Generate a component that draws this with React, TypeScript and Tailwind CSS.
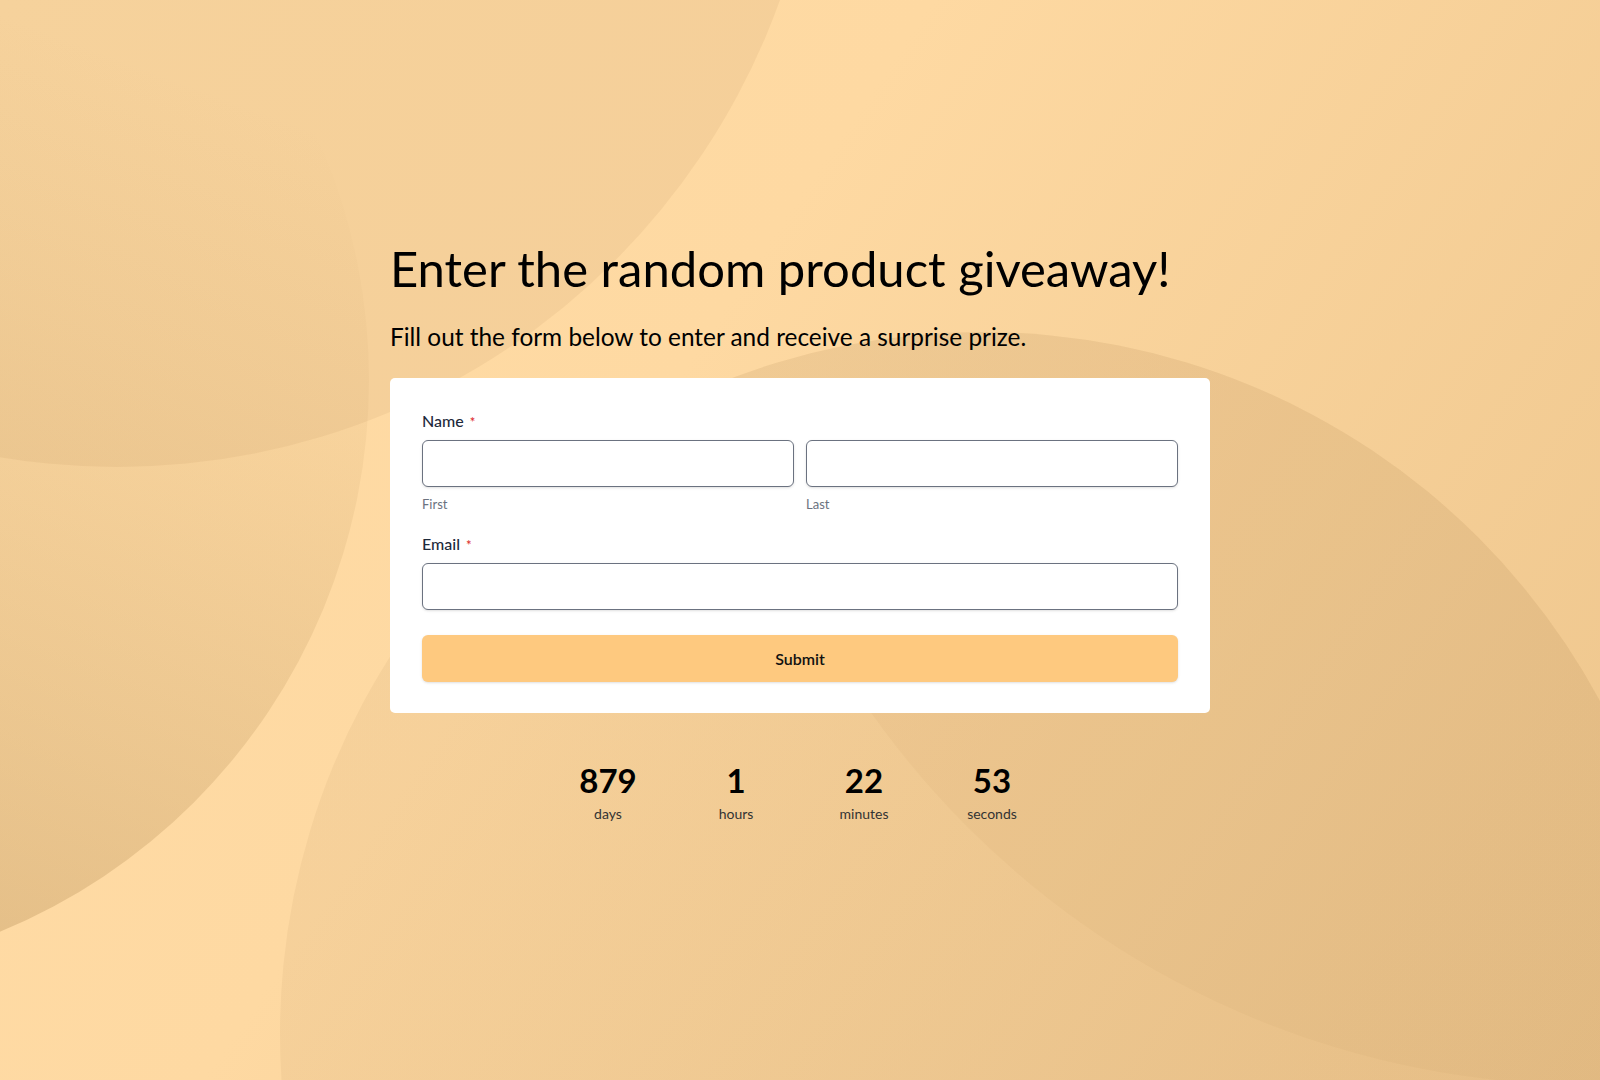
import React from "react"

const countdown = [
    { value: "879", label: "days" },
    { value: "1", label: "hours" },
    { value: "22", label: "minutes" },
    { value: "53", label: "seconds" },
]

const Background = () => (
    <svg className="absolute inset-0 w-full h-full" viewBox="0 0 1600 1080" preserveAspectRatio="none">
        <defs>
            <linearGradient id="base" x1="0" y1="0" x2="1600" y2="1080" gradientUnits="userSpaceOnUse">
                <stop offset="0" stopColor="#FFDCA6" />
                <stop offset="0.4" stopColor="#FED9A2" />
                <stop offset="1" stopColor="#EDC58C" />
            </linearGradient>
            <linearGradient id="shadeB" x1="300" y1="120" x2="0" y2="930" gradientUnits="userSpaceOnUse">
                <stop offset="0" stopColor="#B08850" stopOpacity="0" />
                <stop offset="0.3" stopColor="#B08850" stopOpacity="0.08" />
                <stop offset="1" stopColor="#B08850" stopOpacity="0.32" />
            </linearGradient>
            <linearGradient id="shadeC" x1="400" y1="400" x2="1600" y2="1080" gradientUnits="userSpaceOnUse">
                <stop offset="0" stopColor="#BE9664" stopOpacity="0.12" />
                <stop offset="1" stopColor="#BE9664" stopOpacity="0.16" />
            </linearGradient>
            <clipPath id="clipC">
                <circle cx="982" cy="1034" r="702" />
            </clipPath>
        </defs>
        <rect width="1600" height="1080" fill="url(#base)" />
        {/* top left */}
        <circle cx="117" cy="-237" r="704" fill="#BE9664" fillOpacity="0.14" />
        {/* left */}
        <circle cx="-228" cy="380" r="597" fill="url(#shadeB)" />
        {/* bottom */}
        <circle cx="982" cy="1034" r="702" fill="url(#shadeC)" />
        <circle cx="1590" cy="205" r="880" fill="#B48A54" fillOpacity="0.07" clipPath="url(#clipC)" />
    </svg>
)

const Label = ({ children }: { children: React.ReactNode }) => (
    <label className="block text-[16px] leading-6 font-medium text-[#1e293b]">
        {children}
        <span className="ml-[6px] text-[13px] text-[#dc2626]">*</span>
    </label>
)

const Input = () => (
    <input type="text" className="block w-full h-[47px] px-3 bg-white border border-[#6b7280] rounded-[6px] shadow-sm outline-none" />
)

const App = () => {
    return (
        <div className="relative w-full h-[1080px] overflow-hidden bg-[#fed9a2] font-['Lato','Noto_Sans',sans-serif]">
            <Background />

            <div className="relative flex flex-col items-center pt-[239px]">
                <div className="w-[820px]">
                    {/* TITLE */}
                    <h1 className="text-[49px] leading-[1.2] font-normal text-black">Enter the random product giveaway!</h1>
                    <p className="mt-[24px] text-[24.4px] leading-[1.2] text-black">Fill out the form below to enter and receive a surprise prize.</p>

                    {/* FORM */}
                    <div className="mt-[27px] bg-white rounded-[5px] px-8 pt-[31px] pb-[31px]">
                        <Label>Name</Label>
                        <div className="mt-[6px] grid grid-cols-2 gap-3">
                            <div>
                                <Input />
                                <div className="mt-2 text-[13px] leading-[18px] text-[#6b7280]">First</div>
                            </div>
                            <div>
                                <Input />
                                <div className="mt-2 text-[13px] leading-[18px] text-[#6b7280]">Last</div>
                            </div>
                        </div>

                        <div className="mt-[19px]">
                            <Label>Email</Label>
                            <div className="mt-[6px]">
                                <Input />
                            </div>
                        </div>

                        <button className="mt-[25px] w-full h-[47px] rounded-[6px] bg-[#fec97f] shadow-sm text-[16px] font-semibold text-[#111]">
                            Submit
                        </button>
                    </div>

                    {/* COUNTDOWN */}
                    <div className="mt-[48px] flex justify-center">
                        {countdown.map(item => (
                            <div key={item.label} className="w-[128px] flex flex-col items-center">
                                <div className="text-[33px] leading-[1.2] font-bold text-black">{item.value}</div>
                                <div className="mt-[5px] text-[14px] leading-[1.2] text-[#333]">{item.label}</div>
                            </div>
                        ))}
                    </div>
                </div>
            </div>
        </div>
    )
}

export default App
